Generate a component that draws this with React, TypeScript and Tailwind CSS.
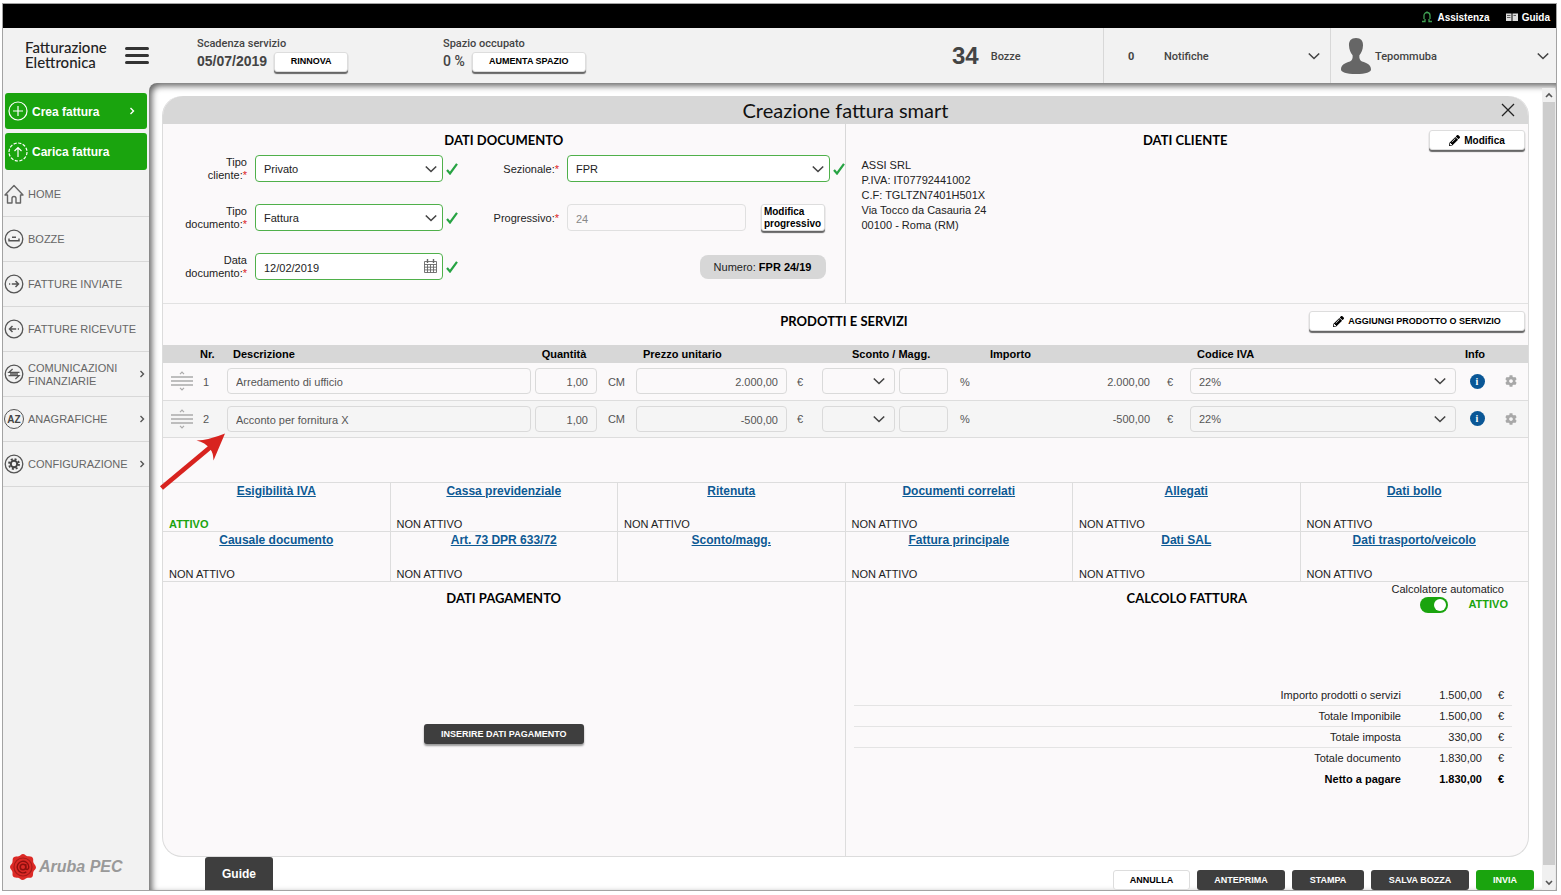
import { useState, type ReactNode } from 'react'
import { FaCog, FaPencilAlt } from 'react-icons/fa'

interface NavItem {
  label: string
  icon: ReactNode
  expandable?: boolean
}

interface Line {
  nr: number
  description: string
  quantity: string
  price: string
  amount: string
}

interface Section {
  title: string
  status: string
}

const lines: Line[] = [
  { nr: 1, description: 'Arredamento di ufficio', quantity: '1,00', price: '2.000,00', amount: '2.000,00' },
  { nr: 2, description: 'Acconto per fornitura X', quantity: '1,00', price: '-500,00', amount: '-500,00' },
]

const sections: Section[] = [
  { title: 'Esigibilità IVA', status: 'ATTIVO' },
  { title: 'Cassa previdenziale', status: 'NON ATTIVO' },
  { title: 'Ritenuta', status: 'NON ATTIVO' },
  { title: 'Documenti correlati', status: 'NON ATTIVO' },
  { title: 'Allegati', status: 'NON ATTIVO' },
  { title: 'Dati bollo', status: 'NON ATTIVO' },
  { title: 'Causale documento', status: 'NON ATTIVO' },
  { title: 'Art. 73 DPR 633/72', status: 'NON ATTIVO' },
  { title: 'Sconto/magg.', status: '' },
  { title: 'Fattura principale', status: 'NON ATTIVO' },
  { title: 'Dati SAL', status: 'NON ATTIVO' },
  { title: 'Dati trasporto/veicolo', status: 'NON ATTIVO' },
]

const totals = [
  { label: 'Importo prodotti o servizi', value: '1.500,00' },
  { label: 'Totale Imponibile', value: '1.500,00' },
  { label: 'Totale imposta', value: '330,00' },
  { label: 'Totale documento', value: '1.830,00' },
  { label: 'Netto a pagare', value: '1.830,00' },
]

function CircleIcon({ children }: { children: ReactNode }) {
  return (
    <svg className="h-5 w-5 shrink-0" viewBox="0 0 20 20" fill="none" stroke="#555" strokeWidth="1.3">
      <circle cx="10" cy="10" r="8.8" />
      {children}
    </svg>
  )
}

const navItems: NavItem[] = [
  {
    label: 'HOME',
    icon: (
      <svg className="h-5 w-5 shrink-0" viewBox="0 0 20 20" fill="none" stroke="#666" strokeWidth="1.4">
        <path d="M1 11 10 1.5 19 11h-2.5v8H12v-4.5a2 2 0 0 0-4 0V19H3.5v-8H1Z" strokeLinejoin="round" />
      </svg>
    ),
  },
  { label: 'BOZZE', icon: <CircleIcon><path d="M5 9.5v2.3h10V9.5M8 8.2h4" strokeWidth="1.5" /></CircleIcon> },
  { label: 'FATTURE INVIATE', icon: <CircleIcon><path d="M5 10h1.2M7.8 10H14.5M11.5 7l3 3-3 3" strokeWidth="1.5" /></CircleIcon> },
  { label: 'FATTURE RICEVUTE', icon: <CircleIcon><path d="M15 10h-1.2M12.2 10H5.5M8.5 7 5.5 10 8.5 13" strokeWidth="1.5" /></CircleIcon> },
  { label: 'COMUNICAZIONI FINANZIARIE', icon: <CircleIcon><path d="M15.5 8.3H5l3.6-3.2M6 10h8M4.5 11.7H15l-3.6 3.2" strokeWidth="1.3" /></CircleIcon>, expandable: true },
  {
    label: 'ANAGRAFICHE',
    icon: (
      <span className="flex h-5 w-5 shrink-0 items-center justify-center rounded-full border border-[#555] text-[10px] font-bold text-[#444]">
        AZ
      </span>
    ),
    expandable: true,
  },
  {
    label: 'CONFIGURAZIONE',
    icon: (
      <CircleIcon>
        <circle cx="10" cy="10" r="3.2" stroke="#444" strokeWidth="2" />
        <circle cx="10" cy="10" r="5" stroke="#444" strokeWidth="1.8" strokeDasharray="2 1.93" />
      </CircleIcon>
    ),
    expandable: true,
  },
]

function Chevron({ className = '' }: { className?: string }) {
  return (
    <svg className={`h-3 w-3 ${className}`} viewBox="0 0 12 12" fill="none" stroke="#444" strokeWidth="1.6">
      <path d="M.8 3.5 6 8.5 11.2 3.5" />
    </svg>
  )
}

function ChevronRight({ color }: { color: string }) {
  return (
    <svg className="h-2 w-2" viewBox="0 0 8 8" fill="none" stroke={color} strokeWidth="1.4">
      <path d="M2.5 1 5.5 4 2.5 7" />
    </svg>
  )
}

function Check() {
  return (
    <svg className="ml-[3px] h-3 w-3" viewBox="0 0 12 12" fill="none" stroke="#27a343" strokeWidth="2.2">
      <path d="M1 7 4 10.5 11 .8" />
    </svg>
  )
}

function DragHandle() {
  return (
    <svg className="mx-auto h-5 w-[22px]" viewBox="0 0 22 20" fill="none" stroke="#aaa">
      <path d="M0 6h22M0 10h22M0 14h22" strokeWidth="1.4" />
      <path d="M9 3.2 11 1.2 13 3.2M9 16.8 11 18.8 13 16.8" strokeWidth="1.2" />
    </svg>
  )
}

function FormLabel({ htmlFor, children }: { htmlFor: string; children: ReactNode }) {
  return (
    <label htmlFor={htmlFor} className="pt-px pr-2 text-right leading-[13px] text-[#222]">
      {children}:<span className="text-[#d22]">*</span>
    </label>
  )
}

function Heading({ children }: { children: ReactNode }) {
  return <h2 className="pt-[2px] text-center font-[Lato,sans-serif] text-[13px] font-bold text-black">{children}</h2>
}

const whiteButton =
  'flex cursor-pointer items-center justify-center rounded-[3px] border border-[#ddd] bg-white pt-px font-bold text-black shadow-[0_2px_1px_#666]'
const darkButton =
  'flex h-5 cursor-pointer items-center justify-center rounded-[3px] bg-[#3e3e3e] pt-[2px] text-[9px] font-bold text-white'
const greenField = 'h-[27px] w-full rounded-[4px] border border-[#4fb04a] bg-white px-2 pt-[2px] text-[#222]'
const rowField = 'block h-[26px] w-full rounded-[4px] border border-[#dadada] bg-transparent px-2 pt-[2px] text-[#555]'

function Header() {
  return (
    <header>
      <div className="flex h-6 items-center justify-end gap-4 bg-black pt-[2px] pr-[6px] text-[10px] font-bold text-white">
        <a href="#assistenza" className="flex items-center gap-1">
          <svg className="h-3 w-3" viewBox="0 0 12 12" fill="none" stroke="#3f9f52" strokeWidth="1.3">
            <path d="M3 8V4.5a3 3 0 0 1 6 0V8M1 10.5h3V8M11 10.5H8V8M4.5 2 6 1l1.5 1" />
          </svg>
          Assistenza
        </a>
        <a href="#guida" className="flex items-center gap-1">
          <svg className="h-3 w-3" viewBox="0 0 12 12">
            <path d="M0 2.5h5.5V10H0zM6.5 2.5H12V10H6.5z" fill="#ddd" />
            <path d="M1 4.5h3.5M1 6.5h3.5M7.5 4.5H10" stroke="#555" strokeWidth="0.9" />
          </svg>
          Guida
        </a>
      </div>
      <div className="flex h-[55px] bg-[#f2f2f2] font-[Roboto,sans-serif] text-[12px] font-medium text-[#444]">
        <div className="flex w-[146px] items-center justify-between pl-[22px]">
          <div className="pb-px font-[Lato,sans-serif] text-[15px] leading-[15px] font-medium text-[#222]">
            Fatturazione
            <br />
            Elettronica
          </div>
          <button aria-label="Menu" className="flex w-6 cursor-pointer flex-col gap-1">
            <span className="h-[3px] rounded-full bg-[#333]" />
            <span className="h-[3px] rounded-full bg-[#333]" />
            <span className="h-[3px] rounded-full bg-[#333]" />
          </button>
        </div>
        <div className="ml-12 flex w-[246px] flex-col pt-[9px]">
          <span className="text-[11px] leading-[14px]">Scadenza servizio</span>
          <div className="flex items-center gap-[7px]">
            <span className="font-['Liberation_Sans',sans-serif] text-[14px] font-bold">05/07/2019</span>
            <button className={`${whiteButton} h-5 w-[74px] font-['Liberation_Sans',sans-serif] text-[9px]`}>RINNOVA</button>
          </div>
        </div>
        <div className="flex flex-col pt-[9px]">
          <span className="text-[11px] leading-[14px]">Spazio occupato</span>
          <div className="flex items-center gap-[7px]">
            <span className="text-[14px] font-medium">0 %</span>
            <button className={`${whiteButton} h-5 w-[114px] font-['Liberation_Sans',sans-serif] text-[9px]`}>AUMENTA SPAZIO</button>
          </div>
        </div>
        <div className="ml-auto flex w-[151px] items-center gap-3">
          <span className="font-['Liberation_Sans',sans-serif] text-[24px] font-bold">34</span>
          <span className="pt-[3px] text-[11px]">Bozze</span>
        </div>
        <button className="flex w-[227px] cursor-pointer items-center border-l border-[#d8d8d8] pr-[10px] pl-6 text-[11px]">
          <span className="w-9 pt-[3px] text-left font-bold">0</span>
          <span className="pt-[3px]">Notifiche</span>
          <Chevron className="ml-auto" />
        </button>
        <button className="flex w-[226px] cursor-pointer items-center border-l border-[#d8d8d8] pr-[7px] pl-[10px] text-[11px]">
          <svg className="mr-1 h-9 w-[30px]" viewBox="0 0 30 36" fill="#666">
            <path d="M15 0c5 0 7.3 3 7 7.5-.2 4-1.5 7.5-3.6 9.8-.4 3 .4 5.2 2.6 6.3 5 1.6 9 3.4 9 7.9 0 2.5-5 4.5-15 4.5S0 34 0 31.5c0-4.5 4-6.3 9-7.9 2.2-1.1 3-3.3 2.6-6.3C9.5 15 8.2 11.5 8 7.5 7.7 3 10 0 15 0Z" />
          </svg>
          <span className="pt-[3px]">Tepommuba</span>
          <Chevron className="ml-auto" />
        </button>
      </div>
    </header>
  )
}

function Sidebar() {
  return (
    <aside className="flex w-[146px] shrink-0 flex-col">
      <div className="flex flex-col gap-1 px-[2px] pt-[10px] text-[12px] font-bold text-white">
        <button className="flex h-9 cursor-pointer items-center gap-1 rounded-[3px] bg-[#1aa40e] px-[3px]">
          <svg className="h-5 w-5" viewBox="0 0 20 20" fill="none" stroke="#fff" strokeWidth="1.2">
            <circle cx="10" cy="10" r="9" />
            <path d="M10 5v10M5 10h10" />
          </svg>
          <span className="pt-px">Crea fattura</span>
          <span className="mr-2 ml-auto">
            <ChevronRight color="#fff" />
          </span>
        </button>
        <button className="flex h-[37px] cursor-pointer items-center gap-1 rounded-[3px] bg-[#1aa40e] px-[3px]">
          <svg className="h-5 w-5" viewBox="0 0 20 20" fill="none" stroke="#fff" strokeWidth="1.2">
            <circle cx="10" cy="10" r="9" strokeDasharray="3.2 1.5" />
            <path d="M10 15V5.5M6.5 9 10 5.5 13.5 9" />
          </svg>
          <span className="pt-px">Carica fattura</span>
        </button>
      </div>
      <nav className="mt-[2px]">
        {navItems.map(item => (
          <a
            key={item.label}
            href="#"
            className="flex h-[45px] items-center gap-1 border-b border-[#d8d8d8] pl-px text-[11px] leading-[13px] text-[#666]"
          >
            {item.icon}
            <span className="flex-1 pt-px">{item.label}</span>
            {item.expandable && (
              <span className="mr-[3px]">
                <ChevronRight color="#555" />
              </span>
            )}
          </a>
        ))}
      </nav>
      <div className="mt-auto flex items-center gap-[2px] pb-[9px] pl-[6px]">
        <svg className="h-7 w-7" viewBox="0 0 28 28">
          <path
            d="M14 1c2 0 2.5 2 4.5 2.3 2 .2 4-.3 5.2 1.4 1.1 1.6 0 3.3.8 5 .8 1.8 2.5 2.8 2.5 4.8s-2.2 2.6-2.7 4.5c-.5 2 .2 4-1.4 5.2-1.5 1.1-3.2.1-5 .8-1.6.6-2.4 2-4.3 2-2 0-2.6-1.7-4.5-2.2-1.9-.4-3.8.2-5-1.3-1.2-1.6-.1-3.3-.8-5C2.700 16.800 1 15.900 1 14s1.900-2.700 2.400-4.500c.5-2-.2-3.900 1.300-5.200 1.500-1.200 3.200-.3 5-1C11.500 2.700 12.100 1 14 1Z"
            fill="#dc2a26"
          />
          <circle cx="14" cy="14" r="9" fill="none" stroke="#a81b18" strokeWidth="1.2" />
          <circle cx="14" cy="14" r="2.8" fill="none" stroke="#8c100e" strokeWidth="1.5" />
          <path d="M16.8 11v4c0 2.4 3 2 3-1a5.8 5.8 0 1 0-2.5 4.8" fill="none" stroke="#8c100e" strokeWidth="1.4" />
        </svg>
        <span className="text-[16px] font-bold text-[#999] italic">Aruba PEC</span>
      </div>
    </aside>
  )
}

function DocumentForm() {
  return (
    <div className="border-r border-[#d8d8d8] pb-[23px]">
      <div className="flex h-[31px] items-center justify-center">
        <Heading>DATI DOCUMENTO</Heading>
      </div>
      <div className="grid grid-cols-[92px_188px_16px_108px_1fr_15px] items-center gap-y-[22px]">
        <FormLabel htmlFor="tipo-cliente">Tipo<br />cliente</FormLabel>
        <div className="relative">
          <select id="tipo-cliente" className={`${greenField} appearance-none`}>
            <option>Privato</option>
          </select>
          <Chevron className="pointer-events-none absolute top-2 right-[6px]" />
        </div>
        <Check />
        <FormLabel htmlFor="sezionale">Sezionale</FormLabel>
        <div className="relative">
          <select id="sezionale" className={`${greenField} appearance-none`}>
            <option>FPR</option>
          </select>
          <Chevron className="pointer-events-none absolute top-2 right-[6px]" />
        </div>
        <Check />

        <FormLabel htmlFor="tipo-documento">Tipo<br />documento</FormLabel>
        <div className="relative">
          <select id="tipo-documento" className={`${greenField} appearance-none`}>
            <option>Fattura</option>
          </select>
          <Chevron className="pointer-events-none absolute top-2 right-[6px]" />
        </div>
        <Check />
        <FormLabel htmlFor="progressivo">Progressivo</FormLabel>
        <div className="col-span-2 flex justify-between pr-5">
          <input
            id="progressivo"
            defaultValue="24"
            disabled
            className="h-[27px] w-[179px] rounded-[4px] border border-[#e0e0e0] px-2 pt-[2px] text-[#888]"
          />
          <button className={`${whiteButton} h-[27px] w-16 text-left text-[10px] leading-[12px]`}>
            Modifica
            <br />
            progressivo
          </button>
        </div>

        <FormLabel htmlFor="data-documento">Data<br />documento</FormLabel>
        <div className="relative">
          <input id="data-documento" defaultValue="12/02/2019" className={greenField} />
          <svg className="pointer-events-none absolute top-[6px] right-[6px] h-[14px] w-[13px]" viewBox="0 0 13 14" fill="none" stroke="#666">
            <path d="M.5 2.5h12v11H.5zM.5 5.5h12M.5 8.2h12M.5 10.9h12M3.5 5.5v8M6.5 5.5v8M9.5 5.5v8" strokeWidth="0.9" />
            <path d="M3.5 0v4M9.5 0v4" strokeWidth="1.4" />
          </svg>
        </div>
        <Check />
        <div className="col-span-3 flex justify-end pr-[19px]">
          <span className="flex h-6 w-[126px] items-center justify-center rounded-[8px] bg-[#d7d7d7] pt-px text-[#222]">
            Numero:&nbsp;<b className="text-black">FPR 24/19</b>
          </span>
        </div>
      </div>
    </div>
  )
}

function Customer() {
  return (
    <div>
      <div className="grid h-8 grid-cols-[1fr_auto_1fr] items-center pr-[3px]">
        <span />
        <Heading>DATI CLIENTE</Heading>
        <button className={`${whiteButton} h-5 w-24 gap-1 justify-self-end text-[10px]`}>
          <FaPencilAlt className="h-[11px] w-[11px]" /> Modifica
        </button>
      </div>
      <address className="pt-[2px] pl-4 leading-[15px] text-[#222] not-italic">
        ASSI SRL
        <br />
        P.IVA: IT07792441002
        <br />
        C.F: TGLTZN7401H501X
        <br />
        Via Tocco da Casauria 24
        <br />
        00100 - Roma (RM)
      </address>
    </div>
  )
}

function Products() {
  return (
    <section className="border-t border-[#e2e2e2]">
      <div className="grid h-[41px] grid-cols-[1fr_auto_1fr] items-center pr-[3px] pb-[7px]">
        <span />
        <Heading>PRODOTTI E SERVIZI</Heading>
        <button className={`${whiteButton} h-5 w-[216px] gap-1 justify-self-end text-[9px]`}>
          <FaPencilAlt className="h-[11px] w-[11px]" /> AGGIUNGI PRODOTTO O SERVIZIO
        </button>
      </div>
      <div className="relative pb-[44px]">
        <table className="w-full table-fixed text-[#555]">
          <colgroup>
            <col className="w-[37px]" />
            <col className="w-[25px]" />
            <col />
            <col className="w-[66px]" />
            <col className="w-[35px]" />
            <col className="w-[155px]" />
            <col className="w-[31px]" />
            <col className="w-[77px]" />
            <col className="w-[53px]" />
            <col className="w-10" />
            <col className="w-[162px]" />
            <col className="w-9" />
            <col className="w-[270px]" />
            <col className="w-[38px]" />
            <col className="w-[32px]" />
          </colgroup>
          <thead>
            <tr className="h-[18px] bg-[#d7d7d7] text-left text-black">
              <th />
              <th>Nr.</th>
              <th className="pl-2">Descrizione</th>
              <th className="pr-1 text-center">Quantità</th>
              <th />
              <th className="pl-[9px]">Prezzo unitario</th>
              <th />
              <th colSpan={3} className="pl-8">Sconto / Magg.</th>
              <th>Importo</th>
              <th />
              <th className="pl-[9px]">Codice IVA</th>
              <th className="pr-1 text-center">Info</th>
              <th />
            </tr>
          </thead>
          <tbody>
            {lines.map(line => (
              <tr key={line.nr} className="h-[37px] border-b border-[#ddd] even:bg-[#f5f5f5]">
                <td><DragHandle /></td>
                <td className="pt-px pl-[3px]">{line.nr}</td>
                <td className="px-[2px]">
                  <input aria-label="Descrizione" defaultValue={line.description} className={rowField} />
                </td>
                <td className="px-[2px]">
                  <input aria-label="Quantità" defaultValue={line.quantity} className={`${rowField} text-right`} />
                </td>
                <td className="pt-px text-center">CM</td>
                <td className="px-[2px]">
                  <input aria-label="Prezzo unitario" defaultValue={line.price} className={`${rowField} text-right`} />
                </td>
                <td className="pt-px pl-2">€</td>
                <td className="px-[2px]">
                  <div className="relative">
                    <select aria-label="Sconto o maggiorazione" className={`${rowField} appearance-none`} />
                    <Chevron className="pointer-events-none absolute top-[7px] right-[10px]" />
                  </div>
                </td>
                <td className="px-[2px]">
                  <input aria-label="Percentuale" className={rowField} />
                </td>
                <td className="pt-px pl-[10px]">%</td>
                <td className="pt-px pr-[2px] text-right">{line.amount}</td>
                <td className="pt-px text-center">€</td>
                <td className="px-[2px]">
                  <div className="relative">
                    <select aria-label="Codice IVA" className={`${rowField} appearance-none`}>
                      <option>22%</option>
                    </select>
                    <Chevron className="pointer-events-none absolute top-[7px] right-[10px]" />
                  </div>
                </td>
                <td>
                  <button
                    aria-label="Info"
                    className="mx-auto flex h-[15px] w-[15px] cursor-pointer items-center justify-center rounded-full bg-[#0a5796] font-['Liberation_Serif',serif] text-[10px] font-bold text-white"
                  >
                    i
                  </button>
                </td>
                <td className="pr-[2px]">
                  <button aria-label="Opzioni" className="mx-auto block cursor-pointer">
                    <FaCog className="h-3 w-3 text-[#a8a8a8]" />
                  </button>
                </td>
              </tr>
            ))}
          </tbody>
        </table>
        <svg className="pointer-events-none absolute top-[87px] -left-1 h-[58px] w-[67px]" viewBox="0 0 67 58">
          <path d="M2.5 56 54 13" stroke="#d8231f" strokeWidth="4.8" />
          <path d="M66 1.5 54.5 28.5Q54 20 51.5 17.5 46 10 37.5 8.5Q50 8 66 1.5Z" fill="#d8231f" />
        </svg>
      </div>
    </section>
  )
}

function SectionGrid() {
  return (
    <div className="grid grid-cols-6 grid-rows-[49px_50px] border-t border-[#ddd]">
      {sections.map(section => (
        <div
          key={section.title}
          className="flex flex-col justify-between border-r border-b border-[#ddd] nth-[6n]:border-r-0"
        >
          <a href="#" className="text-center text-[12px] leading-[16px] font-bold text-[#0d5a94] underline">
            {section.title}
          </a>
          <span
            className={`pl-[6px] leading-[14px] ${
              section.status === 'ATTIVO' ? 'font-bold text-[#1aa40e]' : 'text-[#222]'
            }`}
          >
            {section.status}
          </span>
        </div>
      ))}
    </div>
  )
}

function Totals() {
  const [automatic, setAutomatic] = useState(true)

  return (
    <div>
      <div className="grid h-8 grid-cols-[1fr_auto_1fr] items-center">
        <span />
        <Heading>CALCOLO FATTURA</Heading>
        <div className="flex flex-col items-end pr-5">
          <label htmlFor="calcolatore" className="pr-1 leading-[14px] text-[#222]">Calcolatore automatico</label>
          <div className="flex items-center gap-5">
            <input
              id="calcolatore"
              type="checkbox"
              checked={automatic}
              onChange={e => setAutomatic(e.target.checked)}
              className="flex h-4 w-7 cursor-pointer appearance-none items-center rounded-full bg-[#999] p-[2px] before:h-3 before:w-3 before:rounded-full before:bg-white checked:justify-end checked:bg-[#1aa40e]"
            />
            <span className="font-bold text-[#1aa40e]">{automatic ? 'ATTIVO' : 'NON ATTIVO'}</span>
          </div>
        </div>
      </div>
      <div className="pt-[71px] pr-4 pb-16 pl-2">
        <table className="w-full text-[#222]">
          <tbody>
            {totals.map(row => (
              <tr
                key={row.label}
                className="h-[21px] border-b border-[#e4e4e4] text-right last:border-0 last:font-bold last:text-black nth-4:border-0"
              >
                <td>{row.label}</td>
                <td className="w-[81px]">{row.value}</td>
                <td className="w-[30px] pr-2">€</td>
              </tr>
            ))}
          </tbody>
        </table>
      </div>
    </div>
  )
}

export default function App() {
  return (
    <div className="flex min-h-screen bg-white pt-[3px] pr-1 pb-1 pl-[2px] font-['Liberation_Sans',Arial,sans-serif] text-[11px]">
      <div className="flex flex-1 flex-col border border-[#a3a3a3] bg-[#f2f2f2]">
        <Header />
        <div className="flex flex-1">
          <Sidebar />
          <div className="flex min-w-0 flex-1 rounded-tl-[8px] bg-white shadow-[inset_3px_3px_6px_#666]">
            <main className="flex min-w-0 flex-1 flex-col pt-[13px] pl-[13px]">
              <div className="mr-[13px] flex flex-1 flex-col rounded-[20px] border border-t-0 border-[#dcdcdc] bg-[#fbf9fa]">
                <div className="relative flex h-7 items-center justify-center rounded-t-[20px] bg-[#d7d7d7]">
                  <h1 className="font-[Lato,sans-serif] text-[20px] text-[#111]">Creazione fattura smart</h1>
                  <button aria-label="Chiudi" className="absolute right-[13px] cursor-pointer">
                    <svg className="h-[14px] w-[14px]" viewBox="0 0 14 14" stroke="#222" strokeWidth="1.3">
                      <path d="M1 1 13 13M13 1 1 13" />
                    </svg>
                  </button>
                </div>
                <div className="grid grid-cols-2">
                  <DocumentForm />
                  <Customer />
                </div>
                <Products />
                <SectionGrid />
                <div className="grid flex-1 grid-cols-2">
                  <div className="flex flex-col border-r border-[#ddd]">
                    <div className="flex h-8 items-center justify-center">
                      <Heading>DATI PAGAMENTO</Heading>
                    </div>
                    <div className="flex flex-1 items-center justify-center pb-[2px]">
                      <button className={`${darkButton} w-40 shadow-[0_2px_2px_#999]`}>INSERIRE DATI PAGAMENTO</button>
                    </div>
                  </div>
                  <Totals />
                </div>
              </div>
              <footer className="flex items-end justify-between pr-2 pl-[43px]">
                <button className="h-[33px] w-[68px] cursor-pointer rounded-t-[3px] bg-[#3e3e3e] pt-px text-[12px] font-bold text-white">
                  Guide
                </button>
                <div className="flex gap-[7px]">
                  <button className="h-5 w-[77px] cursor-pointer rounded-[3px] border border-[#ddd] bg-white pt-[2px] text-[9px] font-bold text-black">
                    ANNULLA
                  </button>
                  <button className={`${darkButton} w-[88px]`}>ANTEPRIMA</button>
                  <button className={`${darkButton} w-[72px]`}>STAMPA</button>
                  <button className={`${darkButton} w-[98px]`}>SALVA BOZZA</button>
                  <button className="h-5 w-[58px] cursor-pointer rounded-[3px] bg-[#1aa40e] pt-[2px] text-[9px] font-bold text-white">
                    INVIA
                  </button>
                </div>
              </footer>
            </main>
            <div aria-hidden="true" className="mt-[5px] mr-px flex w-[13px] flex-col items-center bg-[#f0f0f0]">
              <svg className="my-1 h-[6px] w-2" viewBox="0 0 8 6" fill="none" stroke="#555" strokeWidth="1.6">
                <path d="M1 5 4 2 7 5" />
              </svg>
              <div className="w-3 flex-1 bg-[#cdcdcd]" />
              <svg className="mt-[15px] mb-1 h-[6px] w-2" viewBox="0 0 8 6" fill="none" stroke="#555" strokeWidth="1.6">
                <path d="M1 1 4 4 7 1" />
              </svg>
            </div>
          </div>
        </div>
      </div>
    </div>
  )
}
